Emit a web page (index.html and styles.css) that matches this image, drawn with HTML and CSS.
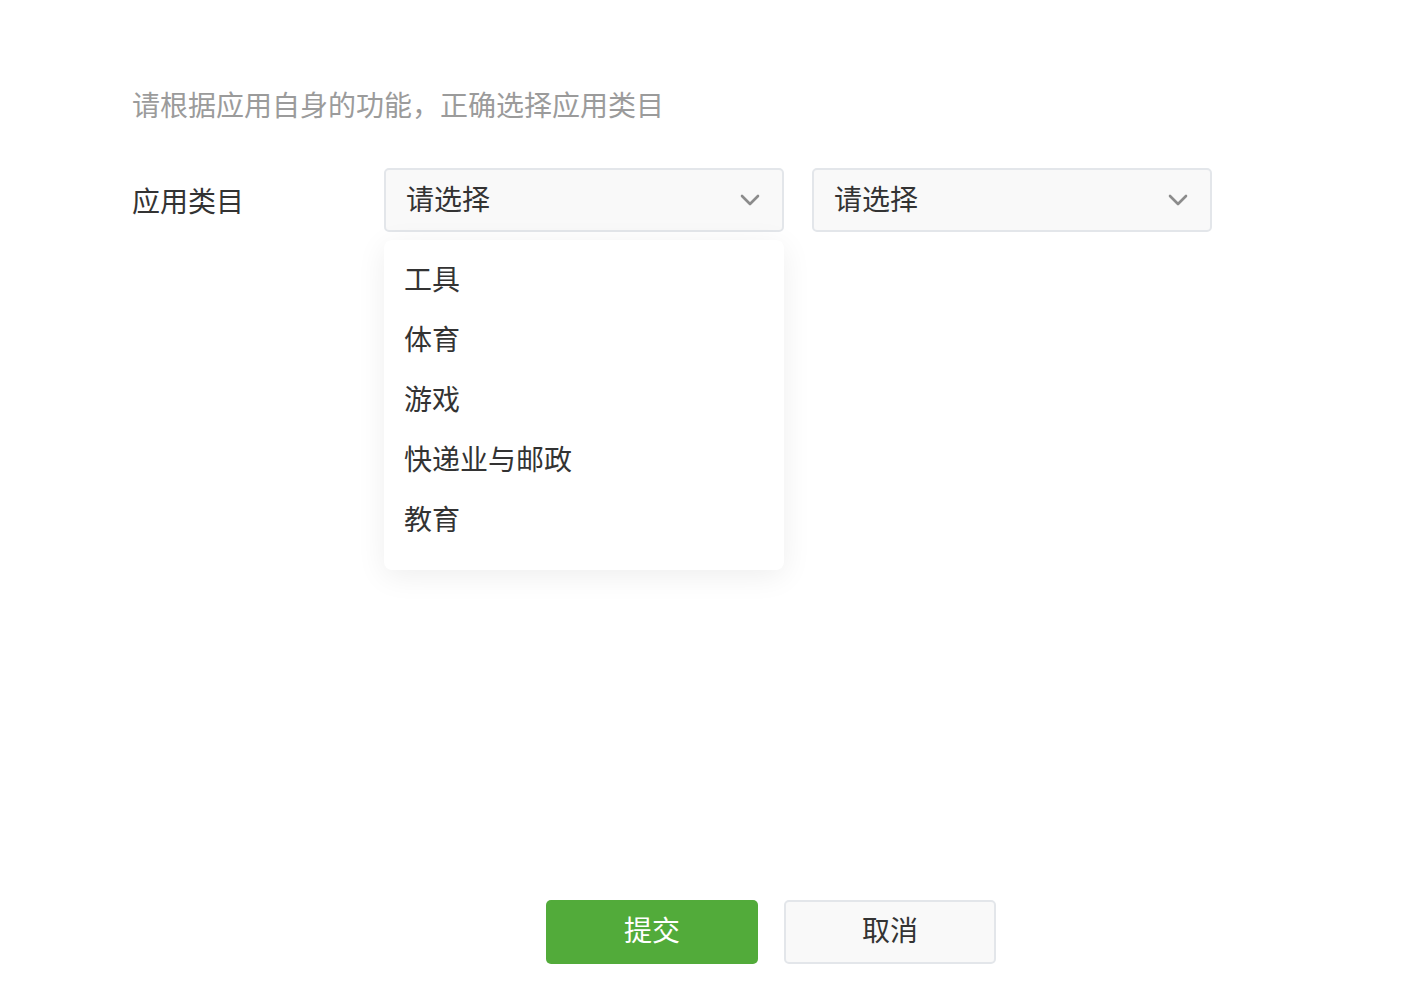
FILE: index.html
```html
<!DOCTYPE html>
<html lang="zh-CN">
<head>
<meta charset="utf-8">
<title>应用类目</title>
<link rel="stylesheet" href="styles.css">
</head>
<body>
<div class="page">
  <p class="hint">请根据应用自身的功能，正确选择应用类目</p>
  <div class="field">
    <div class="label">应用类目</div>
    <div class="selects">
      <div class="select-wrap">
        <div class="select">
          <span>请选择</span>
          <svg class="chev" width="20" height="12" viewBox="0 0 20 12"><path d="M2 2 L10 10 L18 2" fill="none" stroke="#8c8c8c" stroke-width="2.6" stroke-linecap="round" stroke-linejoin="round"/></svg>
        </div>
        <ul class="menu">
          <li>工具</li>
          <li>体育</li>
          <li>游戏</li>
          <li>快递业与邮政</li>
          <li>教育</li>
        </ul>
      </div>
      <div class="select-wrap">
        <div class="select">
          <span>请选择</span>
          <svg class="chev" width="20" height="12" viewBox="0 0 20 12"><path d="M2 2 L10 10 L18 2" fill="none" stroke="#8c8c8c" stroke-width="2.6" stroke-linecap="round" stroke-linejoin="round"/></svg>
        </div>
      </div>
    </div>
  </div>
  <div class="actions">
    <button class="btn primary">提交</button>
    <button class="btn default">取消</button>
  </div>
</div>
</body>
</html>
```
FILE: styles.css
```css
* { box-sizing: border-box; }
html, body { margin: 0; padding: 0; background: #fff; }
body {
  font-family: "Noto Sans CJK SC", "Noto Sans", sans-serif;
  color: #333;
  width: 1418px;
  height: 994px;
  overflow: hidden;
}
.page {
  padding: 84px 8px 0 132px;
  height: 994px;
  display: flex;
  flex-direction: column;
}
.hint {
  margin: 0;
  font-size: 28px;
  line-height: 40px;
  color: #9b9b9b;
}
.field {
  display: flex;
  align-items: flex-start;
  margin-top: 44px;
}
.label {
  width: 252px;
  font-size: 28px;
  line-height: 40px;
  padding-top: 12px;
  color: #333;
}
.selects {
  display: flex;
  gap: 28px;
}
.select-wrap {
  position: relative;
  width: 400px;
}
.select {
  height: 64px;
  border: 2px solid #e3e6ea;
  border-radius: 5px;
  background: #f9f9f9;
  display: flex;
  align-items: center;
  justify-content: space-between;
  padding: 0 22px 0 20px;
  font-size: 28px;
  color: #333;
}
.select span { line-height: 40px; margin-top: -4px; }
.chev { display: block; }
.menu {
  position: absolute;
  top: 72px;
  left: 0;
  width: 400px;
  margin: 0;
  padding: 8px 0 22px 20px;
  list-style: none;
  background: #fff;
  border-radius: 8px;
  box-shadow: 0 6px 30px rgba(0, 0, 0, 0.07);
}
.menu li {
  height: 60px;
  line-height: 60px;
  font-size: 28px;
  color: #333;
}
.actions {
  margin-top: auto;
  margin-bottom: 30px;
  display: flex;
  justify-content: center;
  gap: 26px;
}
.btn {
  width: 212px;
  height: 64px;
  border-radius: 5px;
  font-family: "Noto Sans CJK SC", "Noto Sans", sans-serif;
  font-size: 28px;
  line-height: 40px;
  padding: 0 0 6px 0;
  cursor: pointer;
}
.primary {
  background: #52ab3a;
  border: none;
  color: #fff;
}
.default {
  background: #f9f9f9;
  border: 2px solid #e3e6ea;
  color: #333;
}
```
